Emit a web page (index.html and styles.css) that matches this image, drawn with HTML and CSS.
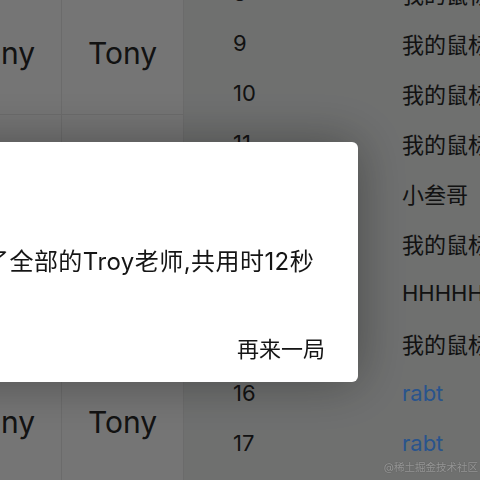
FILE: index.html
```html
<!DOCTYPE html>
<html lang="zh-CN">
<head>
<meta charset="utf-8">
<title>打地鼠</title>
<link rel="stylesheet" href="styles.css">
</head>
<body>
<div class="page">
  <div class="board">
    <div class="cell">Tony</div><div class="cell">Tony</div>
    <div class="cell">Tony</div><div class="cell">Tony</div>
    <div class="cell">Tony</div><div class="cell">Tony</div>
    <div class="cell">Tony</div><div class="cell">Tony</div>
  </div>
  <div class="rank">
    <div class="row"><span class="no">8</span><span class="name">我的鼠标</span></div>
    <div class="row"><span class="no">9</span><span class="name">我的鼠标</span></div>
    <div class="row"><span class="no">10</span><span class="name">我的鼠标</span></div>
    <div class="row"><span class="no">11</span><span class="name">我的鼠标</span></div>
    <div class="row"><span class="no">12</span><span class="name">小叁哥</span></div>
    <div class="row"><span class="no">13</span><span class="name">我的鼠标</span></div>
    <div class="row"><span class="no">14</span><span class="name">HHHHH</span></div>
    <div class="row"><span class="no">15</span><span class="name">我的鼠标</span></div>
    <div class="row"><span class="no">16</span><span class="name link">rabt</span></div>
    <div class="row"><span class="no">17</span><span class="name link">rabt</span></div>
  </div>
</div>
<div class="mask"></div>
<div class="dialog">
  <div class="msg">了全部的Troy老师,共用时12秒</div>
  <div class="actions"><span class="btn">再来一局</span></div>
</div>
<div class="watermark">@稀土掘金技术社区</div>
</body>
</html>
```
FILE: styles.css
```css
html, body {
  margin: 0;
  padding: 0;
  width: 480px;
  height: 480px;
  overflow: hidden;
}
body {
  font-family: Inter, "Noto Sans CJK SC", sans-serif;
  color: #222;
  background: #cacccb;
}
.page {
  display: flex;
  margin-left: -60px;
  margin-top: -8px;
  width: 600px;
}
.board {
  display: grid;
  grid-template-columns: 121px 121px;
  grid-auto-rows: 122px;
  gap: 1px;
  padding-right: 1px;
  background: #c4c4c4;
  flex: none;
}
.cell {
  background: #d5d5d5;
  display: flex;
  align-items: center;
  justify-content: center;
  font-size: 30px;
  color: #222;
}
.rank {
  flex: 1;
  margin-top: -24px;
  background: #cacccb;
  font-size: 22px;
  white-space: nowrap;
}
.row {
  display: flex;
  height: 50px;
  align-items: center;
  padding-left: 49px;
}
.no {
  width: 169px;
  flex: none;
}
.link {
  color: #4c99ff;
}
.mask {
  position: fixed;
  inset: 0;
  background: rgba(0, 0, 0, 0.45);
}
.dialog {
  position: fixed;
  top: 142px;
  left: -120px;
  width: 478px;
  height: 240px;
  box-sizing: border-box;
  padding: 0 33px 18px 105px;
  background: #fff;
  border-radius: 6px;
  box-shadow: 0 0 50px rgba(0, 0, 0, 0.35);
  display: flex;
  flex-direction: column;
  color: #151515;
}
.msg {
  margin-top: 103px;
  font-size: 24px;
  line-height: 34px;
  letter-spacing: 0.45px;
  white-space: nowrap;
}
.actions {
  margin-top: auto;
  display: flex;
  justify-content: flex-end;
}
.btn {
  font-size: 22px;
  line-height: 30px;
  color: #151515;
}
.watermark {
  position: fixed;
  right: 2px;
  bottom: 6px;
  font-size: 10.5px;
  color: rgba(200, 200, 200, 0.6);
  text-shadow: 0 0 1px rgba(0, 0, 0, 0.4);
  white-space: nowrap;
}
```
